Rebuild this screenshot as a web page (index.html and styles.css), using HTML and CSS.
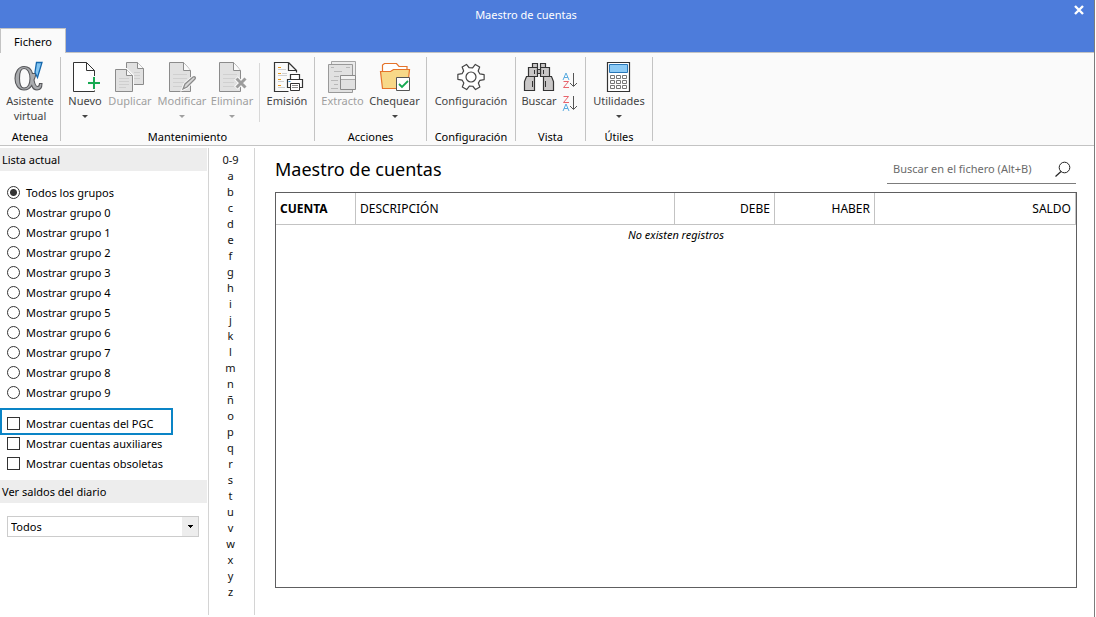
FILE: index.html
```html
<!DOCTYPE html>
<html lang="es">
<head>
<meta charset="utf-8">
<meta name="viewport" content="width=device-width, initial-scale=1">
<title>Maestro de cuentas</title>
<link rel="stylesheet" href="styles.css">
</head>
<body>
<div class="window">
  <header class="titlebar">
    <div class="title-row">
      <span class="window-title">Maestro de cuentas</span>
      <button class="close" type="button" aria-label="Cerrar">
        <svg width="10" height="10" viewBox="0 0 10 10"><path d="M1 1l8 8M9 1L1 9" stroke="#fff" stroke-width="2.4" fill="none"/></svg>
      </button>
    </div>
    <button class="tab" type="button">Fichero</button>
  </header>

  <nav class="ribbon">
    <section class="group w-atenea">
      <div class="tools">
        <button class="tool" type="button">
          <svg width="34" height="34" viewBox="0 0 34 34">
            <path fill-rule="evenodd" d="M11 6.500c5 0 7.500 3 8.500 7l3.500 0c-.5 3-1.300 5-2 6.500.8 4 1.800 6.500 3.500 6.500 1.500 0 2-1.500 2-3h2.500c0 4-1.500 6.500-5 6.500-3 0-4.500-2-5.300-4.500-1.700 3-4.200 4.500-7.700 4.500-5.500 0-9-5-9-11.500S5.500 6.500 11 6.500zM11 8.500c-3 0-4.500 4-4.500 9.700S8 28 11 28c3.500 0 6-3.500 6-9.500S14.500 8.500 11 8.500z" fill="#a9abae" stroke="#57585b" stroke-width="1.100"/>
            <path d="M23.500 2.500h5.500l-4.500 15-2.500-5z" fill="#83c5f2" stroke="#1668ad" stroke-width="1.300"/>
          </svg>
          <span>Asistente<br>virtual</span>
        </button>
      </div>
      <h2>Atenea</h2>
    </section>
    <i class="sep"></i>
    <section class="group w-mant">
      <div class="tools">
        <button class="tool w40" type="button">
          <svg width="34" height="34" viewBox="0 0 34 34">
            <path d="M18.500 2.500h-13v29h21v-1M18.500 2.500l8 8v12M18.500 2.500v8h8" fill="#fff" stroke="#333"/>
            <path d="M26 16v14M20 23h12" stroke="#fafafa" stroke-width="4"/>
            <path d="M26 17v12M20 23h12" stroke="#16a951" stroke-width="2"/>
          </svg>
          <span>Nuevo</span><b class="arrow"></b>
        </button>
        <button class="tool w50" type="button" disabled>
          <svg width="34" height="34" viewBox="0 0 34 34">
            <path d="M24.500 2.500h-11v22h17v-16z" fill="#e1e1e1" stroke="#8b8b8b"/><path d="M24.500 2.500v6h6" fill="#fafafa" stroke="#8b8b8b"/><path d="M21 12.500h6m-6 3h6m-6 3h6" stroke="#cfcfcf"/>
            <path d="M1 8h13l7 7v18H1z" fill="#fafafa"/>
            <path d="M13.500 9.500h-11v22h17v-16z" fill="#e1e1e1" stroke="#8b8b8b"/><path d="M13.500 9.500v6h6" fill="#fafafa" stroke="#8b8b8b"/><path d="M6 18.500h10m-10 3h10m-10 3h10m-10 3h7" stroke="#cfcfcf"/>
          </svg>
          <span>Duplicar</span>
        </button>
        <button class="tool w54" type="button" disabled>
          <svg width="34" height="34" viewBox="0 0 34 34">
            <path d="M18.500 2.500h-14v29h21v-21z" fill="#e1e1e1" stroke="#8b8b8b"/><path d="M18.500 2.500v8h7" fill="#fafafa" stroke="#8b8b8b"/><path d="M8 14.500h14m-14 4h14m-14 4h14m-14 4h9" stroke="#d0d0d0"/>
            <path d="M18 29l2-5 8-7c2-1 3 1 2 2l-8 8z" fill="#e1e1e1" stroke="#fafafa" stroke-width="3"/>
            <path d="M18 29l2-5 8-7c2-1 3 1 2 2l-8 8z" fill="#d8d8d8" stroke="#8b8b8b" stroke-width="1.300"/>
          </svg>
          <span>Modificar</span><b class="arrow"></b>
        </button>
        <button class="tool w46" type="button" disabled>
          <svg width="34" height="34" viewBox="0 0 34 34">
            <path d="M18.500 2.500h-14v29h21v-21z" fill="#e1e1e1" stroke="#8b8b8b"/><path d="M18.500 2.500v8h7" fill="#fafafa" stroke="#8b8b8b"/><path d="M8 14.500h14m-14 4h14m-14 4h11m-11 4h11" stroke="#d0d0d0"/>
            <path d="M21 18l10 10M31 18L21 28" stroke="#fafafa" stroke-width="5"/><path d="M21.500 18.500l9 9M30.500 18.500l-9 9" stroke="#9d9d9d" stroke-width="3"/>
          </svg>
          <span>Eliminar</span><b class="arrow"></b>
        </button>
        <i class="minisep"></i>
        <button class="tool w46" type="button">
          <svg width="34" height="34" viewBox="0 0 34 34">
            <path d="M18.500 2.500h-14v29h14M18.500 2.500l8 8M18.500 2.500v8h8v2" fill="none" stroke="#333" stroke-width="1.200"/>
            <path d="M8 7.500h3m-3 6h3m-3 6h3m-3 6h3" stroke="#e99b1e" stroke-width="1.200"/>
            <path d="M8 9.500h8m-8 6h9m-9 6h6m-6 6h7M12 13.500h5" stroke="#d0d0d0"/>
            <path d="M20.500 14.500h9v5h3v8h-15v-8h3z" fill="#fff" stroke="#333" stroke-width="1.200"/><path d="M20.500 19.500h9M20.500 23.500h9v7h-9z" fill="#fff" stroke="#333"/><path d="M22 25.500h6m-6 2h6" stroke="#888"/><path d="M18.500 21.500h2" stroke="#2d92d8"/>
          </svg>
          <span>Emisión</span>
        </button>
      </div>
      <h2>Mantenimiento</h2>
    </section>
    <i class="sep"></i>
    <section class="group w-acc">
      <div class="tools">
        <button class="tool w48" type="button" disabled>
          <svg width="34" height="34" viewBox="0 0 34 34">
            <path d="M5.500 1.500h24v27h-24z" fill="#ebebeb" stroke="#a5a5a5"/><path d="M2.500 4.500h24v28h-24z" fill="#e1e1e1" stroke="#999"/>
            <path d="M5 7.500h3m12 0h4M8 11.500h8m-8 5h5m-8 4h7m-4 4h4m-7 4h7" stroke="#b8b8b8"/>
            <path d="M14.500 15.500h15v14h-15z" fill="#e1e1e1" stroke="#8b8b8b"/><path d="M15 16h14v3h-14z" fill="#f2f2f2"/><path d="M15 19.500h14" stroke="#aaa"/>
          </svg>
          <span>Extracto</span>
        </button>
        <button class="tool w56" type="button">
          <svg width="34" height="34" viewBox="0 0 34 34">
            <path d="M4.500 12V5l2-1.500h12l2.500 3h8V12" fill="#fff" stroke="#e5732a" stroke-width="1.200"/><path d="M2.500 11.500h10l3-2h16l-2 19h-25z" fill="#f7d888" stroke="#e5732a" stroke-width="1.200"/>
            <path d="M18.500 17.500h13v13h-13z" fill="#fff" stroke="#555"/><path d="M21 24l3 3 6-6" fill="none" stroke="#16a951" stroke-width="1.800"/>
          </svg>
          <span>Chequear</span><b class="arrow"></b>
        </button>
      </div>
      <h2>Acciones</h2>
    </section>
    <i class="sep"></i>
    <section class="group w-conf">
      <div class="tools">
        <button class="tool" type="button">
          <svg width="34" height="34" viewBox="0 0 34 34">
            <path transform="rotate(30 17 17)" d="M13.800 8.200L14.500 4h5l.7 4.200 3 1.700 4-1.500 2.500 4.300-3.300 2.700v3.200l3.300 2.700-2.500 4.300-4-1.500-3 1.700-.7 4.200h-5l-.7-4.200-3-1.700-4 1.500-2.500-4.300 3.300-2.700v-3.200l-3.300-2.700 2.500-4.300 4 1.500z" fill="#fff" stroke="#444" stroke-width="1.200" stroke-linejoin="round"/><circle cx="17" cy="17" r="5" fill="#fff" stroke="#444" stroke-width="1.200"/>
          </svg>
          <span>Configuración</span>
        </button>
      </div>
      <h2>Configuración</h2>
    </section>
    <i class="sep"></i>
    <section class="group w-vista">
      <div class="tools">
        <button class="tool w40" type="button">
          <svg width="34" height="34" viewBox="0 0 34 34">
            <g fill="#c9c7c7" stroke="#333" stroke-width="1.200"><path d="M10.500 3.500h5v4h-5zM18.500 3.500h5v4h-5z"/><path d="M6.500 7.500h9v9h-9zM18.500 7.500h9v9h-9z"/><path d="M15.500 9.500h3v4h-3z"/><path d="M4.500 16.500h8v14h-10v-9zM21.500 16.500h8l2 5v9h-10z"/></g><path d="M10.500 21v6M12.500 10v4M21.500 10v4M23.500 21v6" stroke="#333"/>
          </svg>
          <span>Buscar</span>
        </button>
        <div class="sorts">
          <button type="button" aria-label="Orden ascendente"><svg width="16" height="18" viewBox="0 0 16 18"><path d="M1 8l3-7 3 7M2 5.500h4" fill="none" stroke="#5aabe0"/><path d="M1.500 9.500h5l-5 6h5.500" fill="none" stroke="#e8636b"/><path d="M11.500 1v13M8 11l3.500 3.500L15 11" fill="none" stroke="#555"/></svg></button>
          <button type="button" aria-label="Orden descendente"><svg width="16" height="18" viewBox="0 0 16 18"><path d="M1.500 1.500h5l-5 6h5.500" fill="none" stroke="#e8636b"/><path d="M1 16l3-7 3 7M2 13.500h4" fill="none" stroke="#5aabe0"/><path d="M11.500 1v13M8 11l3.500 3.500L15 11" fill="none" stroke="#555"/></svg></button>
        </div>
      </div>
      <h2>Vista</h2>
    </section>
    <i class="sep"></i>
    <section class="group w-util">
      <div class="tools">
        <button class="tool" type="button">
          <svg width="34" height="34" viewBox="0 0 34 34">
            <path d="M5.500 2.500h22v29h-22z" fill="#fff" stroke="#333" stroke-width="1.200"/><path d="M7.500 4.500h18v8h-18z" fill="#8ccaf5" stroke="#2877b8"/>
            <path d="M8.500 15.500h4v3h-4zM14.500 15.500h4v3h-4zM20.500 15.500h4v3h-4zM8.500 20.500h4v3h-4zM14.500 20.500h4v3h-4zM20.500 20.500h4v3h-4zM8.500 25.500h4v3h-4zM14.500 25.500h4v3h-4zM20.500 25.500h4v3h-4z" fill="#fff" stroke="#777"/>
          </svg>
          <span>Utilidades</span><b class="arrow"></b>
        </button>
      </div>
      <h2>Útiles</h2>
    </section>
    <i class="sep"></i>
  </nav>

  <div class="workspace">
    <aside class="sidebar">
      <h3>Lista actual</h3>
      <div class="options">
        <label><input type="radio" name="grupo" checked>Todos los grupos</label>
        <label><input type="radio" name="grupo">Mostrar grupo 0</label>
        <label><input type="radio" name="grupo">Mostrar grupo 1</label>
        <label><input type="radio" name="grupo">Mostrar grupo 2</label>
        <label><input type="radio" name="grupo">Mostrar grupo 3</label>
        <label><input type="radio" name="grupo">Mostrar grupo 4</label>
        <label><input type="radio" name="grupo">Mostrar grupo 5</label>
        <label><input type="radio" name="grupo">Mostrar grupo 6</label>
        <label><input type="radio" name="grupo">Mostrar grupo 7</label>
        <label><input type="radio" name="grupo">Mostrar grupo 8</label>
        <label><input type="radio" name="grupo">Mostrar grupo 9</label>
      </div>
      <div class="checks">
        <label class="marked"><input type="checkbox">Mostrar cuentas del PGC</label>
        <label><input type="checkbox">Mostrar cuentas auxiliares</label>
        <label><input type="checkbox">Mostrar cuentas obsoletas</label>
      </div>
      <h3 id="diario">Ver saldos del diario</h3>
      <div class="select-box">
        <select aria-labelledby="diario"><option>Todos</option></select>
      </div>
    </aside>

    <nav class="index">
      <a href="#">0-9</a><a href="#">a</a><a href="#">b</a><a href="#">c</a><a href="#">d</a><a href="#">e</a><a href="#">f</a><a href="#">g</a><a href="#">h</a><a href="#">i</a><a href="#">j</a><a href="#">k</a><a href="#">l</a><a href="#">m</a><a href="#">n</a><a href="#">ñ</a><a href="#">o</a><a href="#">p</a><a href="#">q</a><a href="#">r</a><a href="#">s</a><a href="#">t</a><a href="#">u</a><a href="#">v</a><a href="#">w</a><a href="#">x</a><a href="#">y</a><a href="#">z</a>
    </nav>

    <main class="content">
      <div class="content-head">
        <h1>Maestro de cuentas</h1>
        <div class="search">
          <input type="text" aria-label="Buscar en el fichero" placeholder="Buscar en el fichero (Alt+B)">
          <svg width="16" height="16" viewBox="0 0 16 16"><circle cx="9.500" cy="6.500" r="5.300" fill="none" stroke="#222"/><path d="M6 10.500L.5 15.500" stroke="#222" stroke-width="1.200"/></svg>
        </div>
      </div>
      <div class="grid">
        <table>
          <colgroup><col class="c-cuenta"><col><col class="c-num"><col class="c-num"><col class="c-saldo"></colgroup>
          <thead><tr><th class="sorted">CUENTA</th><th>DESCRIPCIÓN</th><th class="num">DEBE</th><th class="num">HABER</th><th class="num">SALDO</th></tr></thead>
          <tbody><tr><td colspan="5">No existen registros</td></tr></tbody>
        </table>
      </div>
    </main>
  </div>
</div>
</body>
</html>
```

FILE: styles.css
```css
* { box-sizing: border-box; }
body {
  margin: 0;
  background: #fff;
  color: #000;
  font: 11px/15px "Noto Sans", "Open Sans", sans-serif;
}
h1, h2, h3 { margin: 0; font-weight: 400; }
button, input, select { font: inherit; color: inherit; }
button { padding: 0; border: 0; background: none; }
.window {
  display: flex;
  flex-direction: column;
  min-height: 100vh;
  margin-right: 1px;
  border-right: 1px solid #7c7c7c;
}

.titlebar { display: flex; flex-direction: column; height: 53px; background: #4d7cdb; border-bottom: 1px solid #c3c3c3; }
.title-row {
  display: grid;
  flex: none;
  grid-template-columns: 30px 1fr 30px;
  align-items: center;
  height: 28px;
  color: #fff;
  text-align: center;
}
.window-title { grid-column: 2; padding-right: 42px; }
.close { display: flex; align-self: start; justify-content: center; padding-top: 5px; }
.tab {
  flex: none;
  align-self: flex-start;
  width: 66px;
  height: 25px;
  border: 1px solid #c3c3c3;
  border-bottom: 0;
  background: #fafafa;
}

.ribbon {
  display: flex;
  padding-top: 4px;
  height: 93px;
  background: #fafafa;
  border-bottom: 1px solid #c3c3c3;
}
.group { display: flex; flex-direction: column; justify-content: space-between; }
.group h2 { padding-bottom: 1px; font-size: 11px; line-height: 15px; text-align: center; }
.tools { display: flex; justify-content: center; padding-top: 3px; }
.tool { display: flex; flex-direction: column; align-items: center; justify-content: flex-start; color: #444; white-space: nowrap; }
.tool span { margin-top: -1px; }
.tool:disabled { color: #a0a0a0; }
.arrow { margin-top: 7px; border: 3px solid transparent; border-top-color: currentColor; border-bottom: 0; }
.sep { width: 1px; background: #c3c3c3; margin-bottom: 4px; }
.minisep { width: 1px; height: 59px; margin: 3px 4px 0; background: #d8d8d8; }
.w-atenea { width: 60px; }
.w-mant { width: 253px; }
.w-acc { width: 111px; }
.w-conf { width: 88px; }
.w-vista { width: 69px; }
.w-util { width: 66px; }
.w40 { width: 40px; }
.w46 { width: 46px; }
.w48 { width: 48px; }
.w50 { width: 50px; }
.w54 { width: 54px; }
.w56 { width: 56px; }
.sorts { display: flex; flex-direction: column; gap: 5px; padding: 12px 4px 0 3px; }
.sorts button, .sorts svg { display: block; }

.workspace { display: flex; flex: 1; padding: 2px 0; }
.sidebar { width: 209px; border-right: 1px solid #d4d4d4; }
.sidebar h3 { margin-right: 1px; padding: 4px 2px; background: #ededed; font-size: 11px; line-height: 15px; }
.options { padding: 11px 7px 0; }
.options label, .checks label { display: flex; align-items: center; height: 20px; gap: 6px; }
.options input, .checks input {
  appearance: none;
  flex: none;
  width: 13px;
  height: 13px;
  margin: 0;
  border: 1px solid #333;
  background: #fff;
}
.options input { border-radius: 50%; }
.options input:checked { background: radial-gradient(circle, #333 3px, #fff 4px); }
.checks { padding: 6px 0 7px; }
.checks label { padding-left: 7px; }
.checks .marked { width: 173px; height: 27px; margin-bottom: -2px; padding: 3px 0 0 5px; border: 2px solid #0a84c6; }
.select-box { padding: 13px 9px 0 7px; }
.select-box select {
  appearance: none;
  display: block;
  width: 100%;
  height: 21px;
  padding: 0 3px;
  border: 1px solid #ccc;
  border-radius: 0;
  background:
    linear-gradient(#000, #000) right 5px top 8px / 5px 1px no-repeat,
    linear-gradient(#000, #000) right 6px top 9px / 3px 1px no-repeat,
    linear-gradient(#000, #000) right 7px top 10px / 1px 1px no-repeat,
    linear-gradient(#ededed, #ededed) right / 16px 100% no-repeat,
    #fff;
}

.index { display: flex; flex-direction: column; width: 46px; padding: 4px 2px 0 0; border-right: 1px solid #d4d4d4; text-align: center; }
.index a { color: #111; line-height: 16px; text-decoration: none; }

.content { display: flex; flex-direction: column; flex: 1; padding: 7px 17px 27px 20px; }
.content-head { display: flex; justify-content: space-between; align-items: flex-start; height: 37px; }
h1 { font-size: 18px; line-height: 28px; }
.search { display: flex; align-items: center; width: 189px; height: 29px; margin-right: 1px; padding: 0 5px 1px 6px; border-bottom: 1px solid #7c7c7c; }
.search input { flex: 1; min-width: 0; border: 0; padding: 0; background: none; outline: 0; }
.search input::placeholder { color: #6b6b6b; opacity: 1; }
.grid { flex: 1; border: 1px solid #5e5e60; }
table { width: 100%; border-collapse: separate; border-spacing: 0; table-layout: fixed; font-size: 12px; }
th { height: 32px; padding: 0 4px; text-align: left; font-weight: 400; border-right: 1px solid #c3c3c3; border-bottom: 1px solid #c3c3c3; }
.sorted { font-weight: 700; }
.num { text-align: right; }
.c-cuenta { width: 80px; }
.c-num { width: 100px; }
.c-saldo { width: 201px; }
td { padding: 2px 0; text-align: center; font-size: 11px; font-style: italic; }
```
